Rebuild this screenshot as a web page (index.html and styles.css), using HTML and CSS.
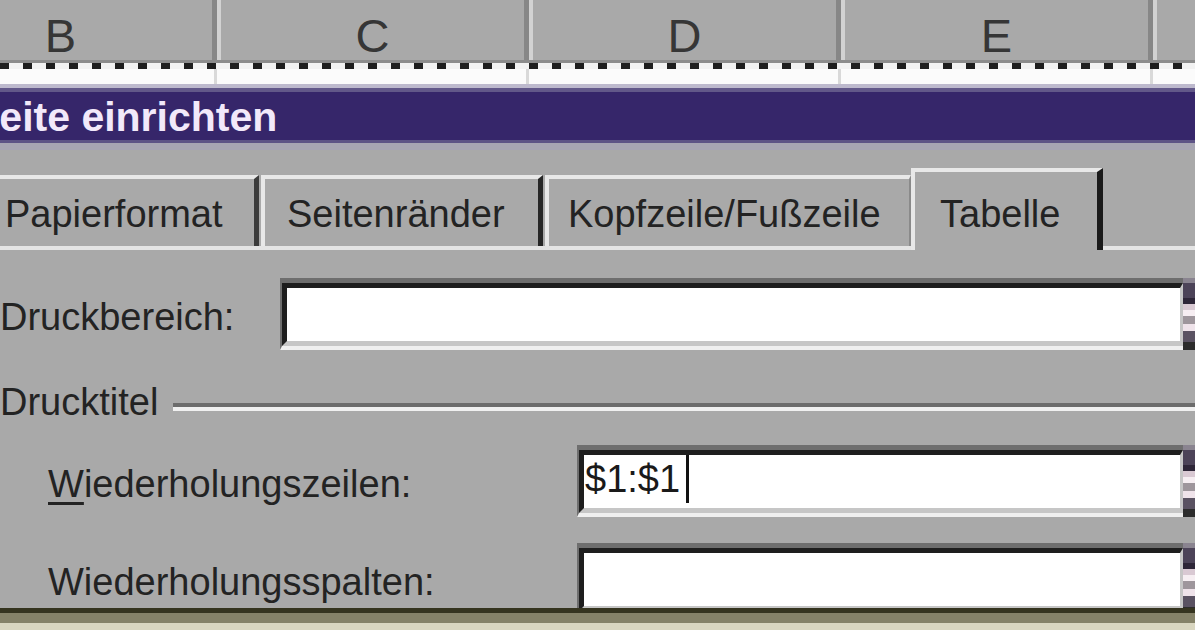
FILE: index.html
```html
<!DOCTYPE html>
<html lang="de">
<head>
<meta charset="utf-8">
<title>Seite einrichten</title>
<link rel="stylesheet" href="styles.css">
</head>
<body>
<div class="screen">
  <div class="colheads">
    <div class="col">B</div>
    <div class="col">C</div>
    <div class="col">D</div>
    <div class="col">E</div>
    <div class="col"></div>
  </div>
  <div class="pagebreak"></div>
  <div class="whitestrip">
    <div class="wcol"></div>
    <div class="wcol"></div>
    <div class="wcol"></div>
    <div class="wcol"></div>
    <div class="wcol"></div>
  </div>
  <div class="titlewrap">
    <div class="titlebar"><span class="title">Seite einrichten</span></div>
  </div>
  <div class="dialog">
    <div class="tabs">
      <div class="tab t1">Papierformat</div>
      <div class="tab t2">Seitenränder</div>
      <div class="tab t3">Kopfzeile/Fußzeile</div>
      <div class="tab t4">Tabelle</div>
    </div>
    <div class="row r-print">
      <div class="lbl lbl-print">Druckbereich:</div>
      <div class="field"><div class="field-in"></div></div>
      <div class="refbtn"></div>
    </div>
    <div class="group">
      <div class="lbl">Drucktitel</div>
      <div class="etch"></div>
    </div>
    <div class="row r-rows">
      <div class="lbl indent"><span class="acc">W</span>iederholungszeilen:</div>
      <div class="field"><div class="field-in"><span class="val">$1:$1</span><span class="caret"></span></div></div>
      <div class="refbtn"></div>
    </div>
    <div class="row r-cols">
      <div class="lbl indent">Wiederholungsspalten:</div>
      <div class="field"><div class="field-in"></div></div>
      <div class="refbtn"></div>
    </div>
  </div>
  <div class="bottom"></div>
</div>
</body>
</html>
```
FILE: styles.css
```css
* { box-sizing: border-box; }
html, body { margin: 0; padding: 0; }
body {
  width: 1195px;
  height: 630px;
  overflow: hidden;
  background: #a9a9a9;
  font-family: "Liberation Sans", Arial, sans-serif;
}
.screen {
  display: flex;
  flex-direction: column;
  width: 1195px;
  height: 630px;
  overflow: hidden;
}

/* spreadsheet column header */
.colheads {
  display: flex;
  flex: none;
  height: 63px;
  margin-left: -95px;
  background: #a9a9a9;
  border-bottom: 3px solid #8c8c8c;
}
.col {
  flex: none;
  width: 312px;
  height: 60px;
  border-left: 4px solid #d2d2d2;
  border-right: 5px solid #878787;
  text-align: center;
  font-size: 47px;
  line-height: 47px;
  padding-top: 12px;
  color: #363636;
}
.pagebreak {
  flex: none;
  height: 6px;
  background: repeating-linear-gradient(90deg, #1e1e1e 0 9px, #f2f2f2 9px 23px);
}
.whitestrip {
  display: flex;
  flex: none;
  height: 15px;
  margin-left: -95px;
  background: #fbfbfb;
}
.wcol {
  flex: none;
  width: 312px;
  border-right: 3px solid #d9d9d9;
}

/* title bar */
.titlewrap {
  flex: none;
  height: 66px;
  border-top: 4px solid #bdb9cd;
  background: #a7a5b3;
  overflow: hidden;
}
.titlebar {
  height: 55px;
  border-top: 4px solid #625889;
  border-bottom: 3px solid #5d5386;
  background: #36266a;
  padding-top: 2px;
  white-space: nowrap;
}
.title {
  display: inline-block;
  margin-left: -28px;
  font-size: 41px;
  line-height: 46px;
  font-weight: bold;
  color: #f2e9fa;
}

/* dialog body */
.dialog {
  flex: none;
  height: 458px;
  overflow: hidden;
  background: #a9a9a9;
}
.tabs {
  display: flex;
  align-items: flex-end;
  height: 100px;
  margin-left: -20px;
  border-bottom: 4px solid #e4e4e4;
}
.tab {
  flex: none;
  height: 71px;
  border-top: 4px solid #e8e8e8;
  border-left: 4px solid #e8e8e8;
  border-right: 5px solid #262626;
  font-size: 38px;
  line-height: 38px;
  padding-top: 16px;
  color: #232323;
  white-space: nowrap;
  background: #a9a9a9;
}
.t1 { width: 279px; padding-left: 21px; margin-right: 2px; border-right-color: #3c3c3c; }
.t2 { width: 282px; padding-left: 22px; margin-right: 2px; }
.t3 { width: 366px; padding-left: 19px; border-right: 2px solid #8a8a8a; }
.t4 {
  width: 192px;
  height: 82px;
  margin-bottom: -4px;
  padding-left: 25px;
  padding-top: 23px;
  border-right: 6px solid #1a1a1a;
  position: relative;
  z-index: 1;
}

.row { display: flex; height: 72px; }
.r-print { margin-top: 28px; }
.r-rows { margin-top: 24px; }
.r-cols { margin-top: 26px; }

.lbl {
  flex: none;
  font-size: 38px;
  line-height: 38px;
  color: #232323;
  padding-top: 20px;
  white-space: nowrap;
}
.lbl-print { width: 280px; }
.indent { width: 577px; padding-left: 48px; }
.acc {
  text-decoration: underline;
  text-decoration-thickness: 3px;
  text-underline-offset: 5px;
}

.field {
  flex: 1;
  min-width: 0;
  height: 72px;
  border-top: 5px solid #6e6e6e;
  border-left: 2px solid #6e6e6e;
  border-bottom: 4px solid #efefef;
}
.field-in {
  display: flex;
  align-items: flex-start;
  height: 100%;
  background: #ffffff;
  border-top: 5px solid #1e1e1e;
  border-left: 5px solid #1e1e1e;
  border-bottom: 5px solid #c6c6c6;
  border-right: 3px solid #c6c6c6;
  padding-left: 1px;
}
.val {
  padding-top: 5px;
  font-size: 38px;
  line-height: 38px;
  color: #1a1a1a;
}
.caret {
  width: 3px;
  height: 48px;
  margin-left: 6px;
  background: #111;
}
.refbtn {
  flex: none;
  width: 12px;
  height: 72px;
  background: linear-gradient(180deg,
    #8a8490 0 5px, #4c4358 5px 20px, #2e2638 20px 26px,
    #d9c9d3 26px 32px, #f6eef2 32px 38px, #9e969c 38px 46px,
    #efe3ea 46px 53px, #5a5262 53px 64px, #2c2c2c 64px 72px);
}

.group { display: flex; height: 38px; margin-top: 33px; }
.group .lbl { padding-top: 0; }
.etch {
  flex: 1;
  margin-left: 15px;
  margin-top: 20px;
  height: 8px;
  border-top: 4px solid #6c6c6c;
  border-bottom: 4px solid #f0f0f0;
}

.bottom {
  flex: none;
  height: 22px;
  border-top: 5px solid #35341f;
  background: linear-gradient(180deg, #858268 0 10px, #d9d6c0 10px);
}
```
